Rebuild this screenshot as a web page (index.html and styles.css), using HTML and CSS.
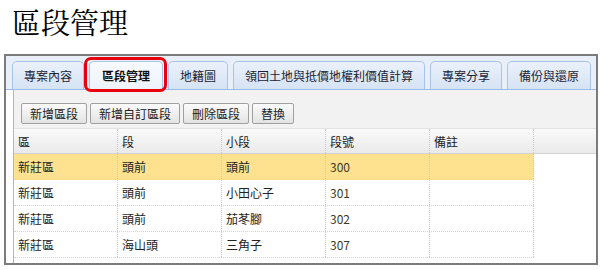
FILE: index.html
```html
<!DOCTYPE html>
<html lang="zh-Hant">
<head>
    <meta charset="UTF-8">
    <title>區段管理</title>
    <link rel="stylesheet" href="styles.css">
</head>
<body>
    <!-- 標題 -->
    <h1 class="page-title">區段管理</h1>

    <div class="frame">
        <!-- 頁籤 -->
        <div class="tab-bar">
            <div class="tab">專案內容</div>
            <div class="tab active">區段管理<span class="highlight"></span></div>
            <div class="tab">地籍圖</div>
            <div class="tab">領回土地與抵價地權利價值計算</div>
            <div class="tab">專案分享</div>
            <div class="tab">備份與還原</div>
        </div>

        <div class="panel">
            <!-- 工具列 -->
            <div class="toolbar">
                <button class="tool-btn">新增區段</button>
                <button class="tool-btn">新增自訂區段</button>
                <button class="tool-btn">刪除區段</button>
                <button class="tool-btn">替換</button>
            </div>

            <!-- 表格 -->
            <div class="grid-header">
                <div class="col">區</div>
                <div class="col">段</div>
                <div class="col">小段</div>
                <div class="col">段號</div>
                <div class="col">備註</div>
            </div>
            <div class="grid-body">
                <div class="row selected">
                    <div class="cell">新莊區</div>
                    <div class="cell">頭前</div>
                    <div class="cell">頭前</div>
                    <div class="cell num">300</div>
                    <div class="cell"></div>
                </div>
                <div class="row">
                    <div class="cell">新莊區</div>
                    <div class="cell">頭前</div>
                    <div class="cell">小田心子</div>
                    <div class="cell num">301</div>
                    <div class="cell"></div>
                </div>
                <div class="row">
                    <div class="cell">新莊區</div>
                    <div class="cell">頭前</div>
                    <div class="cell">茄苳腳</div>
                    <div class="cell num">302</div>
                    <div class="cell"></div>
                </div>
                <div class="row">
                    <div class="cell">新莊區</div>
                    <div class="cell">海山頭</div>
                    <div class="cell">三角子</div>
                    <div class="cell num">307</div>
                    <div class="cell"></div>
                </div>
            </div>
        </div>
    </div>
</body>
</html>
```

FILE: styles.css
```css
* {
    margin: 0;
    padding: 0;
    box-sizing: border-box;
}

body {
    background: #fff;
    font-family: "Noto Sans CJK TC", "Noto Sans", sans-serif;
    font-size: 12px;
    color: #222;
}

/* 標題 */
.page-title {
    font-family: "Noto Serif CJK TC", "Liberation Serif", "Noto Sans CJK TC", serif;
    font-size: 29px;
    font-weight: normal;
    line-height: 40px;
    padding: 2px 0 0 12px;
    color: #000;
}

/* 外框 */
.frame {
    margin: 12px 0 0 4px;
    width: 594px;
    height: 211px;
    border: 2px solid #7b7b7b;
    background: #fff;
    overflow: hidden;
}

/* 頁籤 */
.tab-bar {
    height: 34px;
    padding-left: 6px;
    display: flex;
    align-items: flex-end;
    gap: 5px;
    background: #e8eff9;
    border-bottom: 1px solid #99bbe8;
}

.tab {
    position: relative;
    height: 28px;
    padding: 0 11px;
    line-height: 27px;
    white-space: nowrap;
    color: #1a2233;
    background: linear-gradient(#eaf1fb, #d6e3f4);
    border: 1px solid #a9c4e8;
    border-bottom: none;
    border-radius: 5px 5px 0 0;
}

.tab.active {
    font-weight: bold;
    padding: 0 12px;
    background: linear-gradient(#f7faff, #eef3fb);
    color: #111;
}

.highlight {
    position: absolute;
    top: -5px;
    left: -6px;
    right: -5px;
    bottom: -3px;
    border: 3px solid #e8000b;
    border-radius: 7px;
}

/* 內容區 */
.panel {
    margin-left: 7px;
    height: 100%;
    border-left: 1px solid #99bbe8;
}

.toolbar {
    height: 38px;
    padding: 13px 7px 0;
    display: flex;
    gap: 3px;
    background: #f2f2f2;
}

.tool-btn {
    height: 21px;
    padding: 0 8px;
    font-family: inherit;
    font-size: 12px;
    color: #222;
    background: linear-gradient(#fbfbfb, #e3e3e3);
    border: 1px solid #a0a0a0;
    border-radius: 2px;
}

/* 表格 */
.grid-header {
    height: 26px;
    display: flex;
    background: linear-gradient(#fafafa, #eaeaea);
    border-top: 1px solid #e2e2e2;
    border-bottom: 1px solid #d2d2d2;
}

.col,
.cell {
    width: 104px;
    padding-left: 4px;
    line-height: 25px;
    border-right: 1px dotted #c8c8c8;
}

.row {
    width: 520px;
    height: 26px;
    display: flex;
    border-bottom: 1px dotted #d4d4d4;
}

.row.selected {
    background: #fee290;
}

.num {
    color: #3a3a2a;
}
```
